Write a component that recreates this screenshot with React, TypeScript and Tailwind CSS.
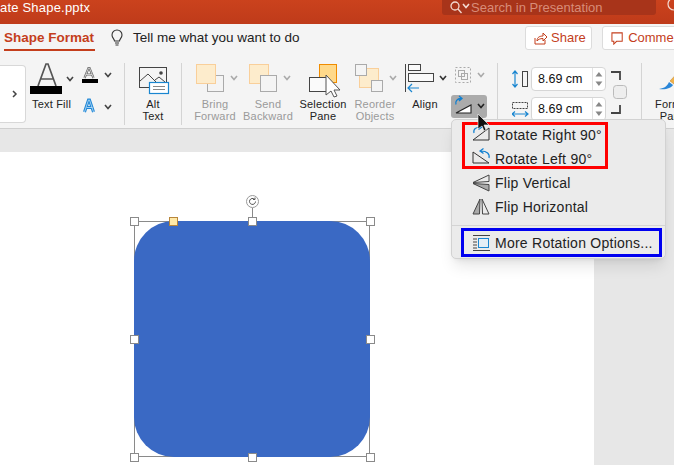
const font = { fontFamily: '"Liberation Sans", Arial, sans-serif' };

function Chev({ x, y, c = "#444" }: { x: number; y: number; c?: string }) {
  return <polyline points={`${x - 3},${y - 2} ${x},${y + 1.5} ${x + 3},${y - 2}`} fill="none" stroke={c} strokeWidth="1.6" />;
}

function Label({ lines, dim }: { lines: string[]; dim?: boolean }) {
  return (
    <div className={`text-[11px] tracking-[0.2px] leading-[12px] text-center whitespace-nowrap ${dim ? "text-[#9a9a9a]" : "text-[#222]"}`}>
      {lines.map((l) => (
        <div key={l}>{l}</div>
      ))}
    </div>
  );
}

function Divider() {
  return <div className="w-px h-[62px] mt-[11px] bg-[#d4d4d4] shrink-0" />;
}

function Tool({ w, lines, dim, children }: { w: string; lines: string[]; dim?: boolean; children: React.ReactNode }) {
  return (
    <div className={`${w} shrink-0 pt-[8px] flex flex-col items-center`}>
      <div className="h-[38px] w-full">{children}</div>
      <Label lines={lines} dim={dim} />
    </div>
  );
}

function SizeInput() {
  return (
    <div className="w-[75px] h-[24px] bg-white border border-[#d6d6d6] rounded-[4px] flex items-center">
      <span className="w-[61px] pl-[6px] text-[12.5px] text-[#111]">8.69 cm</span>
      <div className="h-full w-px bg-[#e2e2e2]" />
      <svg width="12" height="22" viewBox="0 0 12 22">
        <path d="M6 4l3.500 4.500h-7z" fill="#888" />
        <path d="M6 18l3.500-4.500h-7z" fill="#888" />
      </svg>
    </div>
  );
}

function MenuRow({ label, children }: { label: string; children: React.ReactNode }) {
  return (
    <div className="h-6 flex items-center pl-[20px] gap-[5px]">
      <svg width="18" height="18" viewBox="0 0 18 18" className="shrink-0 overflow-visible">
        {children}
      </svg>
      <span className="text-[14px] tracking-[0.25px] text-[#222] whitespace-nowrap">{label}</span>
    </div>
  );
}

const handles = [
  "-left-[5px] -top-[5px]",
  "left-[113px] -top-[5px]",
  "left-[231px] -top-[5px]",
  "-left-[5px] top-[113px]",
  "left-[231px] top-[113px]",
  "-left-[5px] top-[231px]",
  "left-[113px] top-[231px]",
  "left-[231px] top-[231px]",
];

export default function App() {
  return (
    <div className="relative w-[674px] h-[465px] overflow-hidden flex flex-col bg-[#e7e7e7]" style={font}>
      {/* title bar */}
      <div className="h-6 shrink-0 bg-gradient-to-b from-[#cb421d] to-[#bf3b1a] flex items-start justify-between">
        <span className="text-[13px] leading-[13px] tracking-[0.2px] text-white pt-px">ate Shape.pptx</span>
        <div className="flex items-start">
          <div className="w-[214px] h-[15px] bg-[#a8341a] rounded-b-[3px] flex items-center pl-[6px] gap-[1px]">
            <svg width="22" height="14" viewBox="0 0 22 14">
              <circle cx="7" cy="5" r="4" fill="none" stroke="#f3d9d0" strokeWidth="1.300" />
              <path d="M10 8l3.500 4" stroke="#f3d9d0" strokeWidth="1.300" />
              <Chev x={18} y={5} c="#f3d9d0" />
            </svg>
            <span className="text-[13px] leading-[14px] text-[#d88c78] whitespace-nowrap">Search in Presentation</span>
          </div>
          <svg width="8" height="15" viewBox="0 0 8 15" className="ml-[10px] shrink-0">
            <circle cx="8" cy="4" r="6" fill="none" stroke="#f3d9d0" strokeWidth="1.200" />
          </svg>
        </div>
      </div>

      {/* tab row */}
      <div className="h-7 shrink-0 bg-[#f4f4f4] flex items-center pl-1">
        <div className="relative w-[91px] shrink-0 h-full flex items-center">
          <span className="text-[13.5px] font-bold text-[#c43e1c] whitespace-nowrap">Shape Format</span>
          <div className="absolute left-0 right-0 bottom-px h-[2px] bg-[#c43e1c]" />
        </div>
        <svg width="14" height="18" viewBox="0 0 14 18" className="ml-[15px] shrink-0">
          <path d="M4.500 12c0-2-2.500-3-2.500-6a5 5 0 0 1 10 0c0 3-2.500 4-2.500 6zM5 14h4M5.500 16h3" fill="none" stroke="#333" strokeWidth="1.100" />
        </svg>
        <span className="ml-[9px] w-[392px] shrink-0 text-[13.5px] text-[#222] whitespace-nowrap">Tell me what you want to do</span>
        <div className="w-[67px] h-6 shrink-0 bg-white border border-[#dcdcdc] rounded-[3px] flex items-center pl-2 gap-[4px]">
          <svg width="13" height="14" viewBox="0 0 13 14">
            <path d="M1 7v6h10V9M3 10c0-4 3-5 6-5V2l4 4-4 4V7.500c-3 0-5 1-6 2.500z" fill="none" stroke="#c43e1c" strokeWidth="1" />
          </svg>
          <span className="text-[13px] text-[#c43e1c]">Share</span>
        </div>
        <div className="ml-[10px] w-[90px] h-6 shrink-0 bg-white border border-[#dcdcdc] rounded-[3px] flex items-center pl-2 gap-[5px]">
          <svg width="13" height="14" viewBox="0 0 13 14">
            <path d="M1 1.500h11v9H6l-3 3v-3H1z" fill="none" stroke="#c43e1c" strokeWidth="1.100" />
          </svg>
          <span className="text-[13px] text-[#c43e1c]">Comments</span>
        </div>
      </div>

      {/* ribbon */}
      <div className="h-[77px] shrink-0 bg-[#f4f4f4] border-b border-[#cfcfcf] flex overflow-hidden">
        <div className="w-[26px] h-[58px] mt-[13px] shrink-0 bg-white border border-l-0 border-[#d8d8d8] rounded-r-[4px] flex items-center justify-end pr-[7px]">
          <svg width="6" height="8" viewBox="0 0 6 8">
            <path d="M1 1l3 3-3 3" fill="none" stroke="#444" strokeWidth="1.500" />
          </svg>
        </div>

        <div className="w-[51px] shrink-0 pt-[10px] flex flex-col items-center">
          <svg width="51" height="36" viewBox="0 0 51 36">
            <path d="M12 24L20 2h2l8 22M15 17h12" fill="none" stroke="#555" strokeWidth="1.700" />
            <rect x="4" y="24" width="32" height="8" fill="#000" />
            <Chev x={44} y={17} />
          </svg>
          <Label lines={["Text Fill"]} />
        </div>
        <div className="w-[47px] shrink-0 pt-[13px]">
          <svg width="47" height="52" viewBox="0 0 47 52">
            <path d="M7.500 13l4-10h1l4 10M9 9.500h6" fill="none" stroke="#666" strokeWidth="2.200" />
            <path d="M7.500 13l4-10h1l4 10M9 9.500h6" fill="none" stroke="#f4f4f4" strokeWidth=".7" />
            <rect x="5" y="14" width="16" height="4" fill="#000" />
            <Chev x={31} y={10} />
            <path d="M7.500 47l4-12h1l4 12M9.500 42.500h6" fill="none" stroke="#1f87d6" strokeWidth="3" />
            <path d="M7.500 47l4-12h1l4 12M9.500 42.500h6" fill="none" stroke="#bfe0f7" strokeWidth=".8" />
            <Chev x={31} y={42} />
          </svg>
        </div>
        <Divider />

        <Tool w="w-[56px]" lines={["Alt", "Text"]}>
          <svg width="56" height="38" viewBox="0 0 56 38">
            <rect x="14.500" y="7.500" width="27" height="20" fill="none" stroke="#444" />
            <path d="M15 21l8-7 9 9M30 20l4-3 6 5" fill="none" stroke="#444" />
            <circle cx="36" cy="13" r="1.800" fill="#444" />
            <rect x="24.500" y="22.500" width="19" height="11" fill="#fff" stroke="#1a86d0" strokeWidth="1.200" />
            <path d="M28 26.500h12M28 29.500h12" stroke="#888" />
          </svg>
        </Tool>
        <Divider />
        <div className="w-[6px] shrink-0" />

        <Tool w="w-[54px]" lines={["Bring", "Forward"]} dim>
          <svg width="54" height="38" viewBox="0 0 54 38">
            <rect x="19.500" y="15.500" width="16" height="16" fill="#f4f4f4" stroke="#aaa" />
            <rect x="8.500" y="4.500" width="19" height="19" fill="#fdeccc" stroke="#f9cf9a" />
            <Chev x={46} y={18} c="#aaa" />
          </svg>
        </Tool>
        <Tool w="w-[52px]" lines={["Send", "Backward"]} dim>
          <svg width="52" height="38" viewBox="0 0 52 38">
            <rect x="7.500" y="4.500" width="19" height="19" fill="#fdeccc" stroke="#f9cf9a" />
            <rect x="18.500" y="15.500" width="16" height="16" fill="#f4f4f4" stroke="#aaa" />
            <Chev x={45} y={18} c="#aaa" />
          </svg>
        </Tool>
        <Tool w="w-[58px]" lines={["Selection", "Pane"]}>
          <svg width="58" height="38" viewBox="0 0 58 38">
            <rect x="25.500" y="4.500" width="17" height="18" fill="#ffd98a" stroke="#f08c00" />
            <rect x="15.500" y="17.500" width="18" height="14" fill="#fafafa" stroke="#444" />
            <path d="M32 15l14 15h-6l3 6-3 1-3-6-5 4z" fill="#fff" stroke="#555" />
          </svg>
        </Tool>
        <Tool w="w-[46px]" lines={["Reorder", "Objects"]} dim>
          <svg width="46" height="38" viewBox="0 0 46 38">
            <rect x="7.500" y="8.500" width="19" height="19" fill="#fdeccc" stroke="#f9cf9a" />
            <rect x="3.500" y="4.500" width="11" height="11" fill="#f4f4f4" stroke="#aaa" />
            <rect x="19.500" y="20.500" width="11" height="11" fill="#f4f4f4" stroke="#aaa" />
            <Chev x={41} y={18} c="#aaa" />
          </svg>
        </Tool>
        <Tool w="w-[54px]" lines={["Align"]}>
          <svg width="54" height="38" viewBox="0 0 54 38">
            <path d="M7.500 4v28" stroke="#444" />
            <rect x="10.500" y="4.500" width="12" height="6" fill="#fafafa" stroke="#444" />
            <rect x="10.500" y="13.500" width="25" height="8" fill="#fafafa" stroke="#444" />
            <path d="M21 28H10M14 24l-4 4 4 4" fill="none" stroke="#1a86d0" strokeWidth="1.200" />
            <Chev x={45} y={18} c="#333" />
          </svg>
        </Tool>

        <div className="w-[45px] shrink-0 flex flex-col">
          <svg width="45" height="43" viewBox="0 0 45 43">
            <rect x="3.500" y="15.500" width="15" height="15" fill="none" stroke="#aaa" strokeDasharray="2 2" />
            <rect x="6.500" y="18.500" width="6" height="6" fill="none" stroke="#aaa" />
            <rect x="9.500" y="21.500" width="6" height="6" fill="none" stroke="#aaa" />
            <Chev x={29} y={23} c="#aaa" />
          </svg>
          <div className="-ml-px w-9 h-[23px] bg-[#ababab] rounded-[3px] flex items-center">
            <svg width="36" height="23" viewBox="0 0 36 23">
              <path d="M5 9.500c-1-3 1-6 5-6M8 1l3 2.500L8 6" fill="none" stroke="#0f7fd0" strokeWidth="1.300" />
              <path d="M5 18l15-8v8z" fill="#fff" stroke="#222" strokeWidth="1.100" />
              <Chev x={30} y={11} c="#222" />
            </svg>
          </div>
        </div>
        <Divider />

        <div className="w-[143px] shrink-0 pt-[15px] pl-[14px] flex">
          <svg width="17" height="54" viewBox="0 0 17 54" className="shrink-0">
            <path d="M3 4v16M0.500 7L3 4l2.500 3M.5 17L3 20l2.500-3" fill="none" stroke="#1a86d0" strokeWidth="1.200" />
            <rect x="10.500" y="4.500" width="5" height="15" fill="none" stroke="#444" />
            <rect x="0.500" y="35.500" width="15" height="6" fill="none" stroke="#444" strokeDasharray="2 1" />
            <path d="M0 47h16M3 44.500L0 47l3 2.500M13 44.500l3 2.500-3 2.500" fill="none" stroke="#1a86d0" strokeWidth="1.200" />
          </svg>
          <div className="ml-[2px] flex flex-col gap-[6px] shrink-0">
            <SizeInput />
            <SizeInput />
          </div>
          <svg width="26" height="54" viewBox="0 0 26 54" className="shrink-0">
            <path d="M5 5h9v8M5 46h9v-8" fill="none" stroke="#444" strokeWidth="1.800" />
            <rect x="7.500" y="18.500" width="13" height="13" rx="3" fill="#eee" stroke="#bbb" />
          </svg>
        </div>
        <Divider />

        <Tool w="w-[62px]" lines={["Format", "Pane"]}>
          <svg width="62" height="38" viewBox="0 0 62 38">
            <path d="M17 29c6-1 8-3 10-7l4 3c-2 3-7 5-14 4z" fill="#2a86d8" />
            <path d="M28 21L40 8l3 3-11 13z" fill="#f1b24a" stroke="#b9832f" strokeWidth=".5" />
          </svg>
        </Tool>
      </div>

      {/* slide area */}
      <div className="flex-1 flex">
        <div className="relative w-[594px] mt-[23px] bg-white">
          <div className="absolute left-[134px] top-[69px] w-[236px] h-[236px] border border-[#8a8a8a]">
            <div className="absolute -inset-px bg-[#3a69c4] rounded-[40px]" />
            <div className="absolute left-[117px] -top-[14px] w-px h-[14px] bg-[#8a8a8a]" />
            <div className="absolute left-[111px] -top-[27px] w-[13px] h-[13px] rounded-full bg-white border border-[#999] flex items-center justify-center">
              <svg width="9" height="9" viewBox="0 0 9 9">
                <path d="M7.500 4.500a3 3 0 1 1-1-2.300M7 .5v2H5" fill="none" stroke="#555" />
              </svg>
            </div>
            {handles.map((h) => (
              <div key={h} className={`absolute ${h} w-[9px] h-[9px] bg-white border border-[#8a8a8a]`} />
            ))}
            <div className="absolute left-[34px] -top-[5px] w-[9px] h-[9px] bg-[#ffe9a8] border border-[#b8863b]" />
          </div>
        </div>
      </div>

      {/* rotate menu */}
      <div className="absolute left-[451px] top-[119px] w-[215px] h-[140px] bg-[#ebebeb] border border-[#d2d2d2] rounded-[5px] shadow-lg pt-[3px]">
        <div className="relative">
          <MenuRow label="Rotate Right 90°">
            <path d="M1 14L17 2v12z" fill="none" stroke="#333" />
            <path d="M2 7C1 3 4 1 9 1M6.500-1.500L10 1 6.500 3.500" fill="none" stroke="#0f7fd0" strokeWidth="1.200" />
          </MenuRow>
          <MenuRow label="Rotate Left 90°">
            <path d="M1 2v11h16z" fill="none" stroke="#333" />
            <path d="M17 8c1-4-2-7-8-7M11.500-1.500L8 1l3.500 2.500" fill="none" stroke="#0f7fd0" strokeWidth="1.200" />
          </MenuRow>
          <MenuRow label="Flip Vertical">
            <path d="M1 8.500L17 1v6.500z" fill="none" stroke="#444" />
            <path d="M1 9.500l16 1V17z" fill="#aaa" stroke="#444" />
          </MenuRow>
          <MenuRow label="Flip Horizontal">
            <path d="M8 1L1 16h6.500z" fill="#aaa" stroke="#444" />
            <path d="M10 1l7 15h-6.500z" fill="none" stroke="#444" />
          </MenuRow>
          <div className="absolute left-[10px] -top-px w-[146px] h-[47px] border-[3px] border-[#ff0000]" />
        </div>
        <div className="mt-[6px] h-px bg-[#d4d4d4]" />
        <div className="relative mt-[5px]">
          <MenuRow label="More Rotation Options...">
            <path d="M1 1.500h17M1 16.500h17" stroke="#444" />
            <rect x="6.500" y="4.500" width="10" height="9" fill="#e4eef6" stroke="#1a86d0" />
            <path d="M1 5h4M1 8h4M1 11h4M1 14h4" stroke="#444" />
          </MenuRow>
          <div className="absolute left-[9px] -top-[3px] w-[201px] h-[29px] border-[3px] border-[#0000f0]" />
        </div>
      </div>

      {/* pointer over rotate button */}
      <svg width="14" height="18" viewBox="0 0 14 18" className="absolute left-[477px] top-[113px]">
        <path d="M1 1l11 11H7l2 5-2 1-2-5-4 3z" fill="#111" stroke="#fff" strokeWidth=".6" />
      </svg>
    </div>
  );
}
